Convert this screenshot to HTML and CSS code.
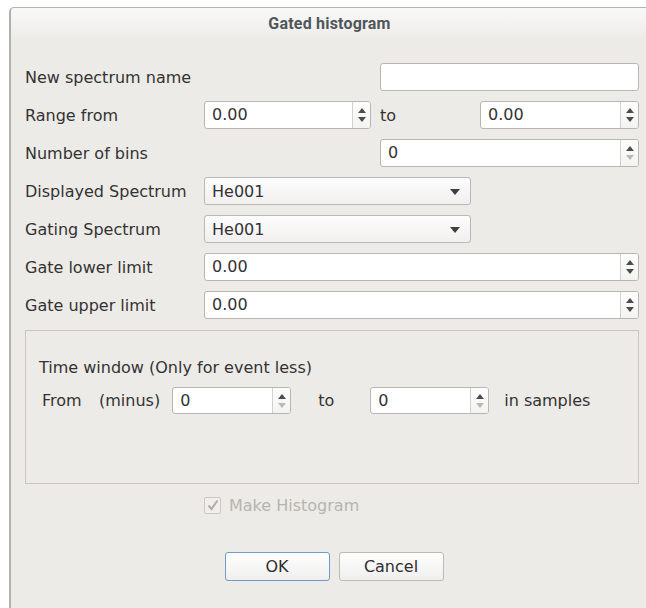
FILE: index.html
```html
<!DOCTYPE html>
<html lang="en">
<head>
<meta charset="utf-8">
<title>Gated histogram</title>
<link rel="stylesheet" href="styles.css">
</head>
<body>
<div class="window">
  <div class="titlebar"><span class="title">Gated histogram</span></div>
  <div class="content">
    <div class="form">
      <div class="row">
        <span class="label">New spectrum name</span>
        <div class="entry w-right push"></div>
      </div>
      <div class="row">
        <span class="label">Range from</span>
        <div class="spin w-range">
          <span class="val">0.00</span>
          <div class="arrows">
            <svg class="up" width="8" height="5" viewBox="0 0 8 5"><path d="M0 5 L4 0 L8 5Z"/></svg>
            <svg class="down" width="8" height="5" viewBox="0 0 8 5"><path d="M0 0 L8 0 L4 5Z"/></svg>
          </div>
        </div>
        <span class="to">to</span>
        <div class="spin w-range2 push">
          <span class="val">0.00</span>
          <div class="arrows">
            <svg class="up" width="8" height="5" viewBox="0 0 8 5"><path d="M0 5 L4 0 L8 5Z"/></svg>
            <svg class="down" width="8" height="5" viewBox="0 0 8 5"><path d="M0 0 L8 0 L4 5Z"/></svg>
          </div>
        </div>
      </div>
      <div class="row">
        <span class="label">Number of bins</span>
        <div class="spin w-right push">
          <span class="val">0</span>
          <div class="arrows">
            <svg class="up" width="8" height="5" viewBox="0 0 8 5"><path d="M0 5 L4 0 L8 5Z"/></svg>
            <svg class="down off" width="8" height="5" viewBox="0 0 8 5"><path d="M0 0 L8 0 L4 5Z"/></svg>
          </div>
        </div>
      </div>
      <div class="row">
        <span class="label">Displayed Spectrum</span>
        <div class="combo">
          <span class="val">He001</span>
          <svg class="caret" width="10" height="6" viewBox="0 0 10 6"><path d="M0 0 L10 0 L5 6Z"/></svg>
        </div>
      </div>
      <div class="row">
        <span class="label">Gating Spectrum</span>
        <div class="combo">
          <span class="val">He001</span>
          <svg class="caret" width="10" height="6" viewBox="0 0 10 6"><path d="M0 0 L10 0 L5 6Z"/></svg>
        </div>
      </div>
      <div class="row">
        <span class="label">Gate lower limit</span>
        <div class="spin grow">
          <span class="val">0.00</span>
          <div class="arrows">
            <svg class="up" width="8" height="5" viewBox="0 0 8 5"><path d="M0 5 L4 0 L8 5Z"/></svg>
            <svg class="down" width="8" height="5" viewBox="0 0 8 5"><path d="M0 0 L8 0 L4 5Z"/></svg>
          </div>
        </div>
      </div>
      <div class="row">
        <span class="label">Gate upper limit</span>
        <div class="spin grow">
          <span class="val">0.00</span>
          <div class="arrows">
            <svg class="up" width="8" height="5" viewBox="0 0 8 5"><path d="M0 5 L4 0 L8 5Z"/></svg>
            <svg class="down" width="8" height="5" viewBox="0 0 8 5"><path d="M0 0 L8 0 L4 5Z"/></svg>
          </div>
        </div>
      </div>
    </div>

    <div class="group">
      <div class="group-title">Time window (Only for event less)</div>
      <div class="window-row">
        <span class="from">From</span>
        <span class="minus">(minus)</span>
        <div class="spin w-small">
          <span class="val">0</span>
          <div class="arrows">
            <svg class="up" width="8" height="5" viewBox="0 0 8 5"><path d="M0 5 L4 0 L8 5Z"/></svg>
            <svg class="down off" width="8" height="5" viewBox="0 0 8 5"><path d="M0 0 L8 0 L4 5Z"/></svg>
          </div>
        </div>
        <span class="to-small">to</span>
        <div class="spin w-small">
          <span class="val">0</span>
          <div class="arrows">
            <svg class="up" width="8" height="5" viewBox="0 0 8 5"><path d="M0 5 L4 0 L8 5Z"/></svg>
            <svg class="down off" width="8" height="5" viewBox="0 0 8 5"><path d="M0 0 L8 0 L4 5Z"/></svg>
          </div>
        </div>
        <span class="unit">in samples</span>
      </div>
    </div>

    <div class="check-row">
      <span class="checkbox">
        <svg width="12" height="12" viewBox="0 0 12 12"><path d="M1.5 6.5 L4.5 10 L10.5 1.5" fill="none" stroke="currentColor" stroke-width="2"/></svg>
      </span>
      <span class="check-label">Make Histogram</span>
    </div>

    <div class="buttons">
      <button class="btn default">OK</button>
      <button class="btn">Cancel</button>
    </div>
  </div>
</div>
</body>
</html>
```

FILE: styles.css
```css
* { box-sizing: border-box; }

html, body {
  margin: 0;
  padding: 0;
  background: #ffffff;
}

body {
  font-family: "DejaVu Sans", sans-serif;
  font-size: 16px;
  color: #333333;
  overflow: hidden;
}

.window {
  margin: 7px 0 0 9px;
  width: 637px;
  height: 601px;
  border-top: 1px solid #b4b4b2;
  border-left: 2px solid #b0b0ae;
  border-top-left-radius: 5px;
  background: #edebe7;
}

.titlebar {
  height: 32px;
  line-height: 32px;
  text-align: center;
  background: linear-gradient(#f9f9f8, #f2f1ef 60%, #edebe7);
  border-top-left-radius: 4px;
}

.title {
  font-family: Roboto, "DejaVu Sans", sans-serif;
  font-weight: 700;
  font-size: 16px;
  letter-spacing: 0.2px;
  color: #50565a;
  padding-left: 2px;
}

.content {
  padding: 23px 7px 0 14px;
}

.form {
  display: flex;
  flex-direction: column;
  gap: 10px;
}

.row {
  display: flex;
  align-items: center;
  height: 28px;
}

.label {
  width: 179px;
  flex: none;
  white-space: nowrap;
}

.push { margin-left: auto; }
.grow { flex: 1; }

.entry {
  height: 28px;
  background: #ffffff;
  border: 1px solid #b9b6b1;
  border-radius: 3px;
}

.w-right { width: 259px; }
.w-range { width: 167px; }
.w-range2 { width: 159px; }
.w-small { width: 119px; }

.spin {
  display: flex;
  align-items: stretch;
  height: 28px;
  background: #ffffff;
  border: 1px solid #b9b6b1;
  border-radius: 3px;
}

.spin .val {
  flex: 1;
  padding-left: 7px;
  line-height: 26px;
}

.arrows {
  width: 18px;
  flex: none;
  border-left: 1px solid #d3d1cc;
  background: linear-gradient(#fdfdfd, #f3f3f2);
  border-radius: 0 2px 2px 0;
  display: flex;
  flex-direction: column;
  align-items: center;
  justify-content: center;
  gap: 4px;
}

.arrows svg { display: block; fill: #4c4c4c; }
.arrows svg.off { fill: #b9b9b9; }

.to {
  margin-left: 9px;
}

.combo {
  width: 267px;
  height: 28px;
  display: flex;
  align-items: center;
  padding: 0 10px 0 7px;
  border: 1px solid #bab8b3;
  border-radius: 3px;
  background: linear-gradient(#fdfdfd, #f1f0ef);
}

.combo .val { flex: 1; }
.caret { display: block; fill: #3f3f3f; margin-top: 1px; }

.group {
  margin-top: 11px;
  height: 154px;
  border: 1px solid #cac7c2;
  padding: 27px 13px 0 13px;
}

.group-title {
  line-height: 19px;
}

.window-row {
  margin-top: 10px;
  display: flex;
  align-items: center;
  height: 27px;
}

.window-row .spin { height: 27px; }
.window-row .spin .val { line-height: 25px; }

.from {
  margin-left: 3px;
  width: 57px;
}

.minus {
  margin-right: 12px;
}

.to-small {
  margin-left: 27px;
  margin-right: 36px;
}

.unit {
  margin-left: 15px;
}

.check-row {
  margin-top: 11px;
  padding-left: 179px;
  display: flex;
  align-items: center;
  height: 20px;
  color: #b7b4af;
}

.checkbox {
  width: 17px;
  height: 17px;
  border: 1px solid #cbc8c3;
  border-radius: 2px;
  background: #f1efec;
  display: flex;
  align-items: center;
  justify-content: center;
  color: #b0ada8;
}

.checkbox svg { display: block; }

.check-label {
  margin-left: 8px;
}

.buttons {
  margin-top: 37px;
  display: flex;
  justify-content: center;
  gap: 9px;
  padding-left: 4px;
}

.btn {
  font-family: "DejaVu Sans", sans-serif;
  font-size: 16px;
  color: #2e2e2e;
  width: 105px;
  height: 29px;
  padding: 0;
  border: 1px solid #bcbab5;
  border-radius: 3px;
  background: linear-gradient(#fefefe, #f0efee);
}

.btn.default {
  border-color: #6f9bc8;
}
```
